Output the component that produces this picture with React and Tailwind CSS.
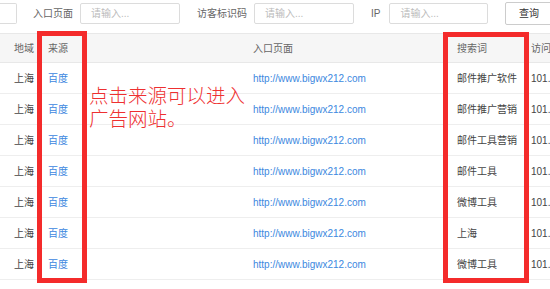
import React from 'react';

// Visitor log table with red annotation overlay

const rows = [
  { region: '上海', source: '百度', url: 'http://www.bigwx212.com', keyword: '邮件推广软件', ip: '101.' },
  { region: '上海', source: '百度', url: 'http://www.bigwx212.com', keyword: '邮件推广营销', ip: '101.' },
  { region: '上海', source: '百度', url: 'http://www.bigwx212.com', keyword: '邮件工具营销', ip: '101.' },
  { region: '上海', source: '百度', url: 'http://www.bigwx212.com', keyword: '邮件工具', ip: '101.' },
  { region: '上海', source: '百度', url: 'http://www.bigwx212.com', keyword: '微博工具', ip: '101.' },
  { region: '上海', source: '百度', url: 'http://www.bigwx212.com', keyword: '上海', ip: '101.' },
  { region: '上海', source: '百度', url: 'http://www.bigwx212.com', keyword: '微博工具', ip: '101.' },
];

const font = "font-['Liberation_Sans','Noto_Sans_CJK_SC',sans-serif]";
const cols = 'grid grid-cols-[40px_205px_204px_74px_1fr]';

const Field = ({ width }) => (
  <div className={`shrink-0 h-[21px] ${width} border border-[#dcdcdc] rounded-[2px] bg-white flex items-center pl-[10px] text-[10px] text-[#bbbbbb] whitespace-nowrap`}>
    请输入...
  </div>
);

const App = () => {
  return (
    <div className={`relative w-[550px] h-[289px] overflow-hidden bg-white ${font}`}>
      {/* Filter bar */}
      <div className="flex items-center h-[27px] pt-[3px] pb-[3px] text-[10px] text-[#666666] whitespace-nowrap">
        <div className="shrink-0 h-[21px] w-[17px] border border-l-0 border-[#dcdcdc] rounded-r-[2px]" />
        <span className="shrink-0 ml-[16px] mr-[7px]">入口页面</span>
        <Field width="w-[100px]" />
        <span className="shrink-0 ml-[17px] mr-[7px]">访客标识码</span>
        <Field width="w-[100px]" />
        <span className="shrink-0 ml-[17px] mr-[9px]">IP</span>
        <Field width="w-[99px]" />
        <div className="shrink-0 ml-[17px] h-[23px] w-[47px] border border-[#cccccc] rounded-[2px] bg-white flex items-center justify-center text-[#333333]">
          查询
        </div>
      </div>

      {/* Table */}
      <div className="mt-[6px] w-[600px] text-[10px] whitespace-nowrap">
        <div className={`${cols} h-[30px] items-center bg-[#f6f6f6] border-t border-b border-[#e8e8e8] text-[#666666]`}>
          <div className="pl-[14px]">地域</div>
          <div className="pl-2">来源</div>
          <div className="pl-2">入口页面</div>
          <div className="pl-2">搜索词</div>
          <div className="pl-2">访问</div>
        </div>
        {rows.map((r, i) => (
          <div key={i} className={`${cols} h-[31px] items-center border-b border-[#eeeeee]`}>
            <div className="pl-[14px] text-[#444444]">{r.region}</div>
            <div className="pl-2"><span className="text-[#3c87e0]">{r.source}</span></div>
            <div className="pl-2 text-[#3c87e0]">{r.url}</div>
            <div className="pl-2 text-[#444444]">{r.keyword}</div>
            <div className="pl-2 text-[#444444]">{r.ip}</div>
          </div>
        ))}
      </div>

      {/* Annotation overlay */}
      <div className="absolute left-[37px] top-[31px] w-[50px] h-[252px] border-[5px] border-[#f42b2b]" />
      <div className="absolute left-[443px] top-[32px] w-[86px] h-[251px] border-[5px] border-[#f42b2b]" />
      <div className="absolute left-[89px] top-[85px] text-[19.5px] leading-[23px] font-light text-[#ee3030] whitespace-nowrap">
        <div>点击来源可以进入</div>
        <div>广告网站。</div>
      </div>
    </div>
  );
};

export default App;
